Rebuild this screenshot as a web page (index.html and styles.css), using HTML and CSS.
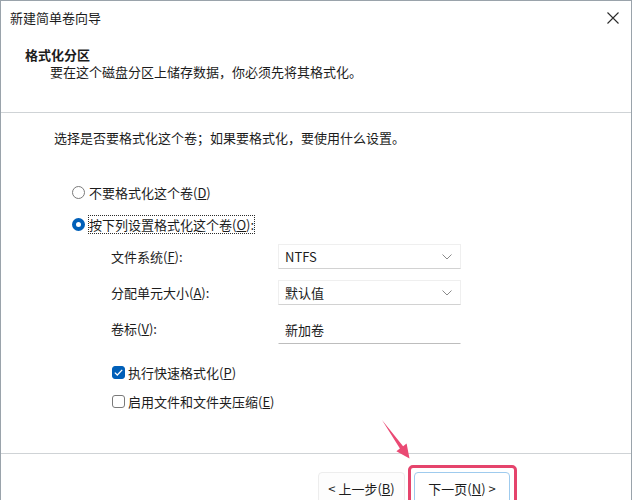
FILE: index.html
```html
<!DOCTYPE html>
<html lang="zh-CN">
<head>
  <meta charset="utf-8">
  <title>新建简单卷向导</title>
  <link rel="stylesheet" href="styles.css">
</head>
<body>
  <div class="window">
    <div class="title-bar">
      <span class="title">新建简单卷向导</span>
      <svg class="close" width="12" height="12" viewBox="0 0 12 12">
        <path d="M0.5 0.5 L11.5 11.5 M11.5 0.5 L0.5 11.5" stroke="#2b2b2b" stroke-width="1.1" fill="none"/>
      </svg>
    </div>

    <div class="header">
      <div class="header-title">格式化分区</div>
      <div class="header-sub">要在这个磁盘分区上储存数据，你必须先将其格式化。</div>
    </div>

    <div class="content">
      <p class="intro">选择是否要格式化这个卷；如果要格式化，要使用什么设置。</p>

      <div class="radio">
        <span class="radio-dot"></span>
        <span>不要格式化这个卷(<u>D</u>)</span>
      </div>
      <div class="radio radio-2">
        <span class="radio-dot radio-checked"></span>
        <span class="focus">按下列设置格式化这个卷(<u>O</u>):</span>
      </div>

      <div class="settings">
        <span class="label">文件系统(<u>F</u>):</span>
        <div class="field select">
          <span>NTFS</span>
          <svg class="chevron" width="10" height="6" viewBox="0 0 10 6"><polyline points="0.5,0.5 5,5 9.5,0.5" stroke="#8a8a8a" stroke-width="1" fill="none"/></svg>
        </div>

        <span class="label">分配单元大小(<u>A</u>):</span>
        <div class="field select">
          <span>默认值</span>
          <svg class="chevron" width="10" height="6" viewBox="0 0 10 6"><polyline points="0.5,0.5 5,5 9.5,0.5" stroke="#8a8a8a" stroke-width="1" fill="none"/></svg>
        </div>

        <span class="label">卷标(<u>V</u>):</span>
        <div class="field textbox">
          <span>新加卷</span>
        </div>
      </div>

      <div class="check">
        <span class="check-box checked">
          <svg width="9" height="7" viewBox="0 0 9 7"><polyline points="0.8,3.6 3.3,6 8.2,0.9" stroke="#fff" stroke-width="1.3" fill="none"/></svg>
        </span>
        <span>执行快速格式化(<u>P</u>)</span>
      </div>
      <div class="check check-2">
        <span class="check-box"></span>
        <span>启用文件和文件夹压缩(<u>E</u>)</span>
      </div>
    </div>

    <div class="footer">
      <button class="btn">&lt; 上一步(<u>B</u>)</button>
      <div class="next-wrap">
        <button class="btn btn-default">下一页(<u>N</u>) &gt;</button>
        <span class="highlight"></span>
      </div>
    </div>

    <svg class="arrow" width="633" height="500" viewBox="0 0 633 500">
      <polygon points="382,420 403.1,446.3 406.6,443.6 409.5,458.5 396.4,451.2 399.9,448.5" fill="#ea4a74"/>
    </svg>
  </div>
</body>
</html>
```

FILE: styles.css
```css
body {
  margin: 0;
  width: 633px;
  height: 500px;
  overflow: hidden;
  background: #ffffff;
  font-family: "Noto Sans CJK SC", "Noto Sans", sans-serif;
  font-size: 13px;
  line-height: 17px;
  color: #1c1c1c;
}
.window {
  position: relative;
  box-sizing: border-box;
  width: 632px;
  height: 500px;
  border: 1px solid #9aa3ab;
  border-bottom: none;
  display: flex;
  flex-direction: column;
  background: #ffffff;
}
.title-bar {
  height: 33px;
  flex: none;
  display: flex;
  align-items: center;
  justify-content: space-between;
  padding: 0 12px 0 9px;
}
.header {
  height: 66px;
  flex: none;
  padding: 12px 0 0 24px;
  border-bottom: 1px solid #cfd3d6;
}
.header-title {
  font-weight: bold;
}
.header-sub {
  padding-left: 25px;
}
.content {
  flex: 1;
  padding: 16px 0 0 53px;
}
.intro {
  margin: 0;
}
.radio {
  display: flex;
  align-items: center;
  margin: 38px 0 0 18px;
}
.radio-2 {
  margin-top: 15px;
}
.radio-dot {
  box-sizing: border-box;
  width: 13px;
  height: 13px;
  border: 1px solid #7a7a7a;
  border-radius: 50%;
  margin-right: 4px;
  background: #fff;
}
.radio-checked {
  border: 4px solid #005fb8;
  background: #fff;
}
.focus {
  outline: 1px dotted #2b2b2b;
  outline-offset: 0;
}
.settings {
  display: grid;
  grid-template-columns: 167px 183px;
  grid-auto-rows: 25px;
  row-gap: 11px;
  align-items: center;
  margin: 11px 0 0 57px;
}
.field {
  box-sizing: border-box;
  height: 25px;
  display: flex;
  align-items: center;
  justify-content: space-between;
  padding: 0 5px 0 6px;
  border: 1px solid #efefef;
  border-bottom-color: #d2d2d2;
}
.chevron {
  margin-right: 3px;
}
.textbox {
  border-color: #ffffff;
  border-bottom-color: #bdbdbd;
  height: 29px;
  margin-top: 2px;
}
.check {
  display: flex;
  align-items: center;
  margin: 23px 0 0 58px;
}
.check-2 {
  margin-top: 12px;
}
.check-box {
  box-sizing: border-box;
  width: 13px;
  height: 13px;
  border: 1px solid #7a7a7a;
  border-radius: 3px;
  margin-right: 3px;
  display: flex;
  align-items: center;
  justify-content: center;
}
.checked {
  background: #005fb8;
  border-color: #005fb8;
}
.footer {
  box-sizing: border-box;
  height: 47px;
  flex: none;
  border-top: 1px solid #cfd3d6;
  display: flex;
  align-items: flex-start;
  padding: 18px 0 0 317px;
  gap: 9px;
}
.btn {
  box-sizing: border-box;
  flex: none;
  height: 32px;
  padding: 0;
  font-family: inherit;
  font-size: 13px;
  color: #1c1c1c;
  background: #fdfdfd;
  border: 1px solid #ededed;
  border-radius: 4px;
  width: 87px;
}
.btn-default {
  width: 96px;
  background: #ffffff;
  border-color: #9fcbee;
}
.next-wrap {
  position: relative;
  flex: none;
}
.highlight {
  position: absolute;
  top: -7px;
  left: -6px;
  right: -7px;
  bottom: -10px;
  border: 3px solid #e5446c;
  border-radius: 5px;
}
.arrow {
  position: absolute;
  top: -1px;
  left: -1px;
  pointer-events: none;
}
```
